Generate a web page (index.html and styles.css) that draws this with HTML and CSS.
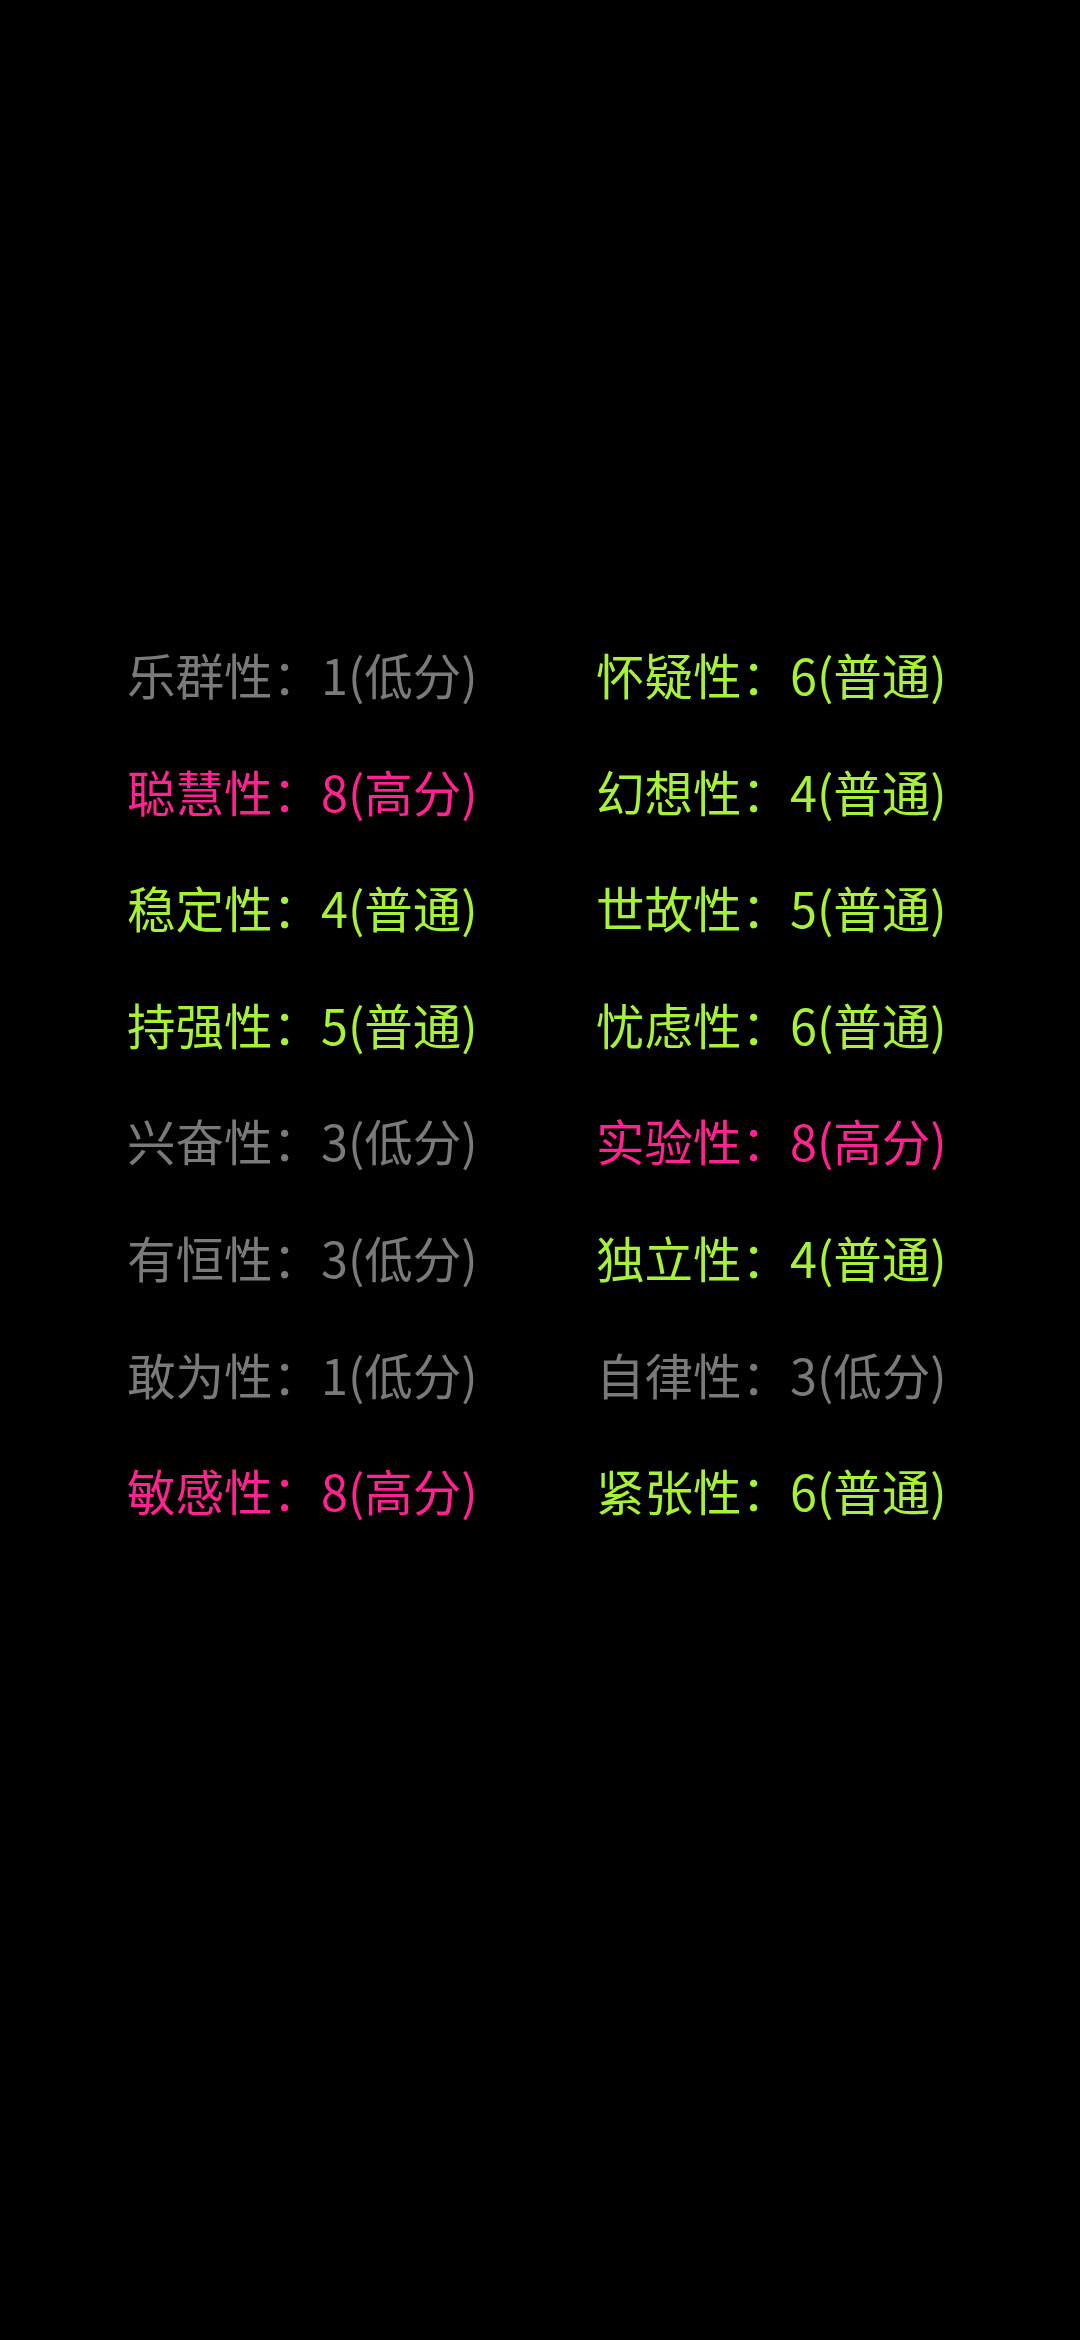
FILE: index.html
```html
<!DOCTYPE html>
<html lang="zh-CN">
<head>
  <meta charset="UTF-8" />
  <title>16PF 结果</title>
  <link rel="stylesheet" href="styles.css">
</head>
<body>
<div class="result" id="result">
  <div class="item low">乐群性：1(低分)</div>
  <div class="item mid">怀疑性：6(普通)</div>
  <div class="item high">聪慧性：8(高分)</div>
  <div class="item mid">幻想性：4(普通)</div>
  <div class="item mid">稳定性：4(普通)</div>
  <div class="item mid">世故性：5(普通)</div>
  <div class="item mid">持强性：5(普通)</div>
  <div class="item mid">忧虑性：6(普通)</div>
  <div class="item low">兴奋性：3(低分)</div>
  <div class="item high">实验性：8(高分)</div>
  <div class="item low">有恒性：3(低分)</div>
  <div class="item mid">独立性：4(普通)</div>
  <div class="item low">敢为性：1(低分)</div>
  <div class="item low">自律性：3(低分)</div>
  <div class="item high">敏感性：8(高分)</div>
  <div class="item mid">紧张性：6(普通)</div>
</div>
</body>
</html>
```

FILE: styles.css
```css
body {
  margin: 0;
  background: #000;
  width: 1080px;
  height: 2340px;
  overflow: hidden;
  font-family: "Noto Sans CJK SC", "Noto Sans", sans-serif;
}
.result {
  display: grid;
  grid-template-columns: 469px 469px;
  padding: 616px 0 0 127px;
}
.item {
  font-size: 48.5px;
  line-height: 116.6px;
  white-space: nowrap;
}
.low {
  color: #7a7a7a;
}
.mid {
  color: #a6f23a;
}
.high {
  color: #ff2290;
}
```
